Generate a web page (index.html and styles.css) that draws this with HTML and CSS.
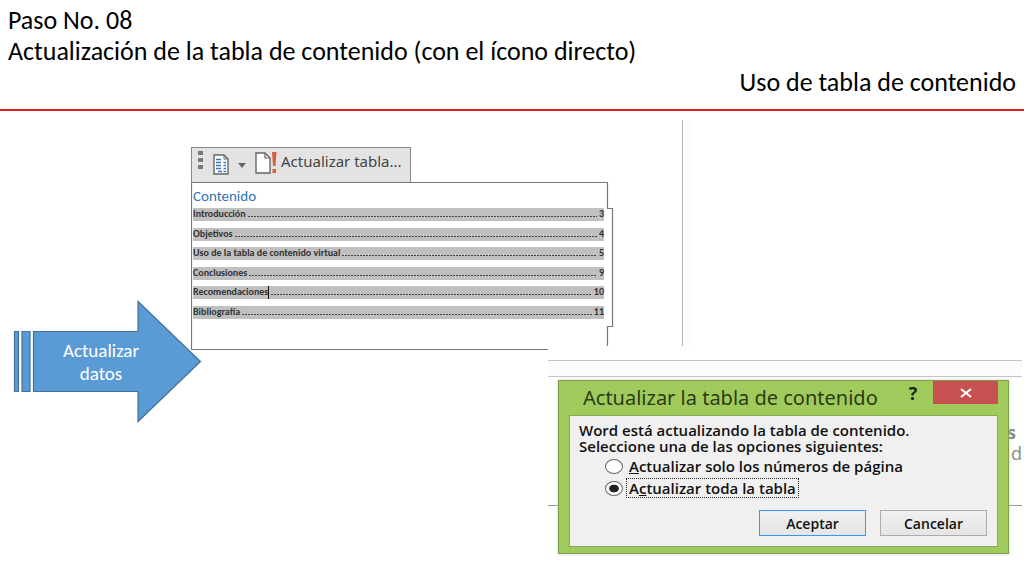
FILE: index.html
```
<!DOCTYPE html>
<html lang="es">
<head>
<meta charset="utf-8">
<meta name="viewport" content="width=device-width, initial-scale=1">
<title>Uso de tabla de contenido</title>
<link rel="stylesheet" href="styles.css">
</head>
<body>
<header class="slide-header">
  <h1 class="heading">Paso No. 08<br>Actualización de la tabla de contenido (con el ícono directo)</h1>
  <p class="heading topic">Uso de tabla de contenido</p>
</header>
<main class="canvas">
  <div class="page-edge"></div>

  <section class="document">
    <div class="toolbar">
      <svg class="grip" width="5" height="20" viewBox="0 0 5 20"><path d="M0 0h5v4H0zM0 7h5v4H0zM0 14h5v4H0z" fill="#777"/></svg>
      <button class="tool" aria-label="Tabla de contenido">
        <svg width="34" height="22" viewBox="0 0 34 22">
          <path d="M1 1h10l4 4v15H1z" fill="#fff" stroke="#666" stroke-width="1.4"/>
          <path d="M11 1v4h4" fill="none" stroke="#666"/>
          <path d="M3 5.500h5M3 8.500h5M3 11.500h5M3 14.500h5M5 17.500h4" stroke="#3b74b9" stroke-width="1.600"/>
          <path d="M10.500 8.500h2.500M10.500 11.500h2.500M10.500 14.500h2.500M10.500 17.500h2.500" stroke="#3b74b9" stroke-width="1.600"/>
          <path d="M25 9h8l-4 5z" fill="#666"/>
        </svg>
      </button>
      <button class="tool update">
        <svg width="22" height="22" viewBox="0 0 22 22">
          <path d="M1 1h9l5 5v15H1z" fill="#fff" stroke="#666" stroke-width="1.400"/>
          <path d="M10 1v5h5" fill="none" stroke="#666" stroke-width="1.200"/>
          <path d="M17 0h4.500l-1 14h-2.500z" fill="#d9603b"/><path d="M17.500 17h3.500v4h-3.500z" fill="#d9603b"/>
        </svg>
        <span class="tool-label">Actualizar tabla...</span>
      </button>
    </div>
    <div class="sheet">
      <svg class="outline" width="423" height="168" viewBox="0 0 423 168"><path d="M357 167.500H.5V.5H416.500V26.500H421.500V144.500H416.500V164" fill="none" stroke="#777" stroke-width="1.200"/></svg>
      <h2 class="toc-title">Contenido</h2>
      <ol class="toc">
        <li class="entry"><span>Introducción</span><i class="leader"></i><span>3</span></li>
        <li class="entry"><span>Objetivos</span><i class="leader"></i><span>4</span></li>
        <li class="entry"><span>Uso de la tabla de contenido virtual</span><i class="leader"></i><span>5</span></li>
        <li class="entry"><span>Conclusiones</span><i class="leader"></i><span>9</span></li>
        <li class="entry"><span class="caret">Recomendaciones</span><i class="leader"></i><span>10</span></li>
        <li class="entry"><span>Bibliografía</span><i class="leader"></i><span>11</span></li>
      </ol>
    </div>
  </section>

  <div class="arrow">
    <svg class="arrow-shape" width="190" height="123" viewBox="0 0 190 123"><path d="M1.500 31.500h4v60h-4zM9 31.500h8v60H9zM20.500 31.500H125V1.500l62.500 60L125 121.500v-30H20.500z" fill="#5b9bd5" stroke="#41719c" stroke-width="1.200"/></svg>
    <p class="arrow-text">Actualizar<br>datos</p>
  </div>

  <section class="capture">
    <div class="ruler"></div>
    <div class="baseline"></div>
    <p class="behind"><b>s</b></p>
    <p class="behind lower">d</p>
    <form class="dialog" role="dialog" aria-labelledby="dialog-title">
      <div class="titlebar">
        <h2 class="dialog-title" id="dialog-title">Actualizar la tabla de contenido</h2>
        <button class="help" type="button" aria-label="Ayuda">?</button>
        <button class="close" type="button" aria-label="Cerrar"><svg width="12" height="10" viewBox="0 0 12 10"><path d="M1 1l10 8M11 1L1 9" stroke="#fff" stroke-width="2"/></svg></button>
      </div>
      <div class="dialog-body">
        <p class="message">Word está actualizando la tabla de contenido.</p>
        <p class="message">Seleccione una de las opciones siguientes:</p>
        <div class="options">
          <label class="option"><input class="radio" type="radio" name="scope"><span class="option-text"><u>A</u>ctualizar solo los números de página</span></label>
          <label class="option"><input class="radio" type="radio" name="scope" checked><span class="option-text focused">A<u>c</u>tualizar toda la tabla</span></label>
        </div>
        <div class="actions">
          <button class="action primary" type="button">Aceptar</button>
          <button class="action" type="button">Cancelar</button>
        </div>
      </div>
    </form>
  </section>
</main>
</body>
</html>
```
FILE: styles.css
```
* { box-sizing: border-box; }
body { margin: 0; background: #fff; color: #000; font-family: Carlito, Lato, sans-serif; }
h1, h2, p, ol { margin: 0; padding: 0; font-weight: 400; }
button { margin: 0; padding: 0; border: 0; background: none; color: inherit; font: inherit; }
svg { display: block; flex: none; }

.slide-header { padding: 5px 8px 11px; border-bottom: 2px solid #e0201f; }
.heading { font-size: 26px; line-height: 31px; }
.topic { text-align: right; }

/* Free canvas: the shapes of the slide overlap one another */
.canvas { position: relative; min-height: 465px; }
.page-edge { position: absolute; left: 682px; top: 9px; width: 11px; height: 226px; border-left: 1px solid #b5b5b5; background: #fcfcfc; }

.document { position: absolute; left: 191px; top: 36px; width: 423px; }
.toolbar { display: flex; align-items: center; gap: 8px; width: 220px; height: 35px; padding: 0 6px; border: 1px solid #888; border-bottom: 0; background: #e3e3e3; color: #444; }
.grip { margin: 0 2px 8px 0; }
.tool { display: flex; align-items: center; gap: 4px; font-family: "Noto Sans", sans-serif; font-size: 15px; white-space: nowrap; }
.update { padding-bottom: 4px; }
.tool-label { padding-bottom: 4px; }
.sheet { position: relative; height: 168px; padding: 4px 10px 0 2px; }
.outline { position: absolute; left: 0; top: 0; }
.toc-title { color: #2e74b5; font-size: 15px; line-height: 20px; }
.toc { display: flex; flex-direction: column; justify-content: space-between; height: 111px; margin-top: 2px; list-style: none; }
.entry { display: flex; gap: 2px; height: 13px; background: #c0c0c0; color: #333; font-size: 10px; line-height: 12px; font-weight: 700; }
.leader { flex: 1; height: 1px; margin-top: 8px; background: repeating-linear-gradient(90deg, #444 0 2px, transparent 2px 3px); }
.caret { border-right: 1px solid #111; }

.arrow { position: absolute; left: 13px; top: 189px; width: 190px; height: 123px; display: grid; align-items: center; }
.arrow-shape { position: absolute; left: 0; top: 0; }
.arrow-text { position: relative; padding-right: 14px; color: #fff; font-size: 19px; line-height: 23px; text-align: center; }

.capture { position: absolute; left: 548px; top: 235px; width: 474px; height: 230px; font-family: "Open Sans", sans-serif; }
.ruler { margin-top: 14px; height: 17px; border: solid #c4c4c4; border-width: 1px 0; background: #fcfcfc; }
.baseline { position: absolute; left: 0; top: 159px; width: 100%; border-top: 1px solid #999; }
.behind { position: absolute; right: 6px; top: 76px; color: #888; font-size: 18px; line-height: 21px; }
.lower { right: 0; top: 97px; }
.dialog { position: absolute; left: 10px; top: 34px; width: 451px; padding: 0 10px 6px; border: 1px solid #7f9f50; background: #a0cb5c; box-shadow: 0 0 3px #ccc; }
.titlebar { display: flex; align-items: flex-start; height: 34px; }
.dialog-title { flex: 1; padding-left: 14px; color: #2c3c14; font-family: "Noto Sans", sans-serif; font-size: 20px; line-height: 34px; white-space: nowrap; }
.help { width: 40px; font-size: 18px; line-height: 24px; font-weight: 700; color: #1c260c; }
.close { display: grid; place-items: center; width: 65px; height: 23px; background: #c75050; }
.dialog-body { padding: 6px 10px 10px 9px; border: 1px solid #86a95a; background: #f0f0f0; color: #111; font-size: 15px; font-weight: 600; }
.message { font-weight: 600; line-height: 16px; white-space: nowrap; }
.options { display: grid; gap: 2px; padding: 2px 0 0 26px; }
.option { display: flex; align-items: center; gap: 4px; height: 20px; }
.radio { appearance: none; width: 18px; height: 15px; margin: 0; border: 1px solid #666; border-radius: 50%; background: #fff; }
.radio:checked { background: radial-gradient(closest-side, #222 0 55%, #fff 65%); }
.option-text { padding: 0 2px; line-height: 18px; white-space: nowrap; }
.focused { outline: 1px dotted #222; }
.actions { display: flex; justify-content: flex-end; gap: 14px; margin-top: 12px; }
.action { width: 107px; height: 26px; border: 1px solid #acacac; background: linear-gradient(#f0f0f0, #e5e5e5); font-size: 14px; }
.action.primary { border-color: #3399ff; }
```
